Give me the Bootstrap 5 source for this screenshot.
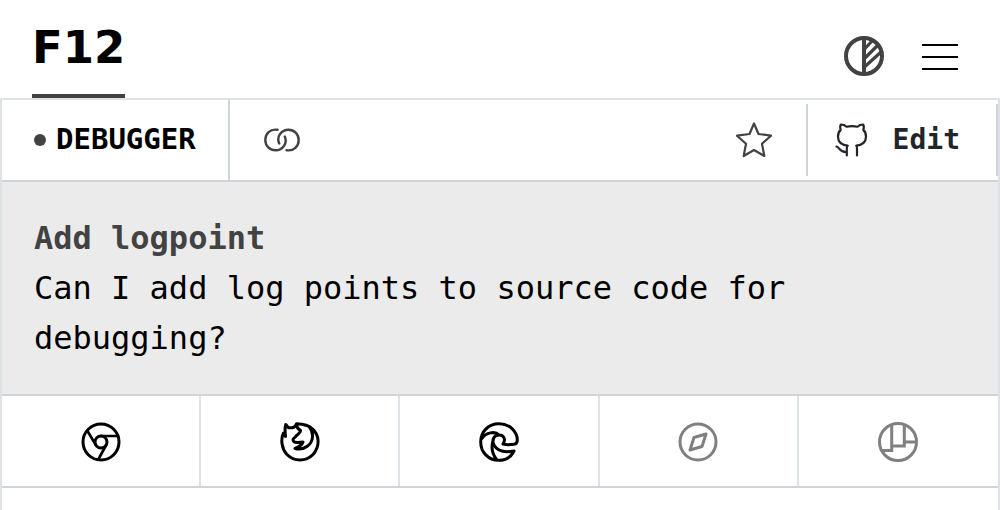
<!DOCTYPE html>
<html lang="en">
<head>
<meta charset="utf-8">
<meta name="viewport" content="width=device-width, initial-scale=1">
<title>F12</title>
<link href="https://cdn.jsdelivr.net/npm/bootstrap@5.3.0/dist/css/bootstrap.min.css" rel="stylesheet">
<style>
  :root { --line: #ced4da; --edge: #dee2e6; --ink: #424242; }
  body { font-family: "DejaVu Sans Mono", monospace; color: #000; background: #fff; }
  a { color: inherit; text-decoration: none; }
  svg { display: block; fill: none; stroke: currentColor; stroke-linecap: round; stroke-linejoin: round; }
  .brand { font: bold 45px/62px "DejaVu Sans", sans-serif; padding-top: 17px; height: 98px; border-bottom: 4px solid var(--ink); }
  .topbar { padding: 0 42px 0 32px; }
  .tools { gap: 38px; padding-top: 14px; }
  .plain { padding: 0; border: 0; background: none; color: inherit; }
  .ink { color: var(--ink); }
  .panel { border: 2px solid var(--edge); border-bottom: 0; }
  .strip { height: 82px; border-bottom: 2px solid var(--line); }
  .category { width: 228px; font-size: 29px; gap: 10px; padding: 0 0 0 32px; border-right: 2px solid var(--line); color: #000; }
  .dot { width: 12px; height: 12px; background: var(--ink); }
  .marks { padding: 0 34px; }
  .edit { font-size: 28px; color: #212529; margin: 4px 0; padding: 0 36px 0 26px; gap: 23px; border: solid var(--line); border-width: 0 2px; }
  .intro { background: #ebebeb; padding: 31px 32px; font-size: 32px; line-height: 50px; border-bottom: 2px solid var(--line); }
  .intro h1, .intro p { font-size: inherit; line-height: inherit; margin: 0; }
  .browsers { border-bottom: 2px solid var(--line); }
  .cell { height: 90px; padding-top: 2px; border-right: 2px solid var(--edge); }
  .cell:last-child { border-right: 0; }
  .cell svg { stroke-width: 3; }
  .off { color: #808080; }
  .square { stroke-linecap: butt; stroke-linejoin: miter; }
  .rest { height: 22px; }
</style>
</head>
<body>
<header class="topbar d-flex justify-content-between">
  <a class="brand" href="#">F12</a>
  <div class="tools d-flex align-items-center">
    <button class="plain ink" type="button" aria-label="Toggle theme">
      <svg width="40" height="40" viewBox="0 0 40 40" stroke-width="4"><circle cx="20" cy="20" r="18"/><path d="M20 2v36"/><path stroke-width="3.200" d="M21 12.500 28 5M21 22 34 9M21 30.500 37 16"/></svg>
    </button>
    <button class="plain" type="button" aria-label="Menu">
      <svg class="square" width="36" height="30" viewBox="0 0 36 30" stroke-width="2"><path d="M0 4h36M0 16h36M0 28h36"/></svg>
    </button>
  </div>
</header>
<main class="panel">
  <div class="strip d-flex">
    <a class="category d-flex align-items-center fw-bold flex-shrink-0" href="#"><span class="dot rounded-circle"></span><span>DEBUGGER</span></a>
    <div class="marks d-flex flex-grow-1 align-items-center justify-content-between ink">
      <a href="#" aria-label="Permalink"><svg width="36" height="24" viewBox="0 0 36 24" stroke-width="2.400"><path d="M13.500 1.800C6 .500 1.300 6 1.300 12 1.300 18 6 22.300 11.500 22.300 18 22.300 24 16 20.800 8.500M22.500 22.200C30 23.500 34.700 18 34.700 12 34.700 6 30 1.700 24.500 1.700 18 1.700 12 8 15.200 15.500"/></svg></a>
      <button class="plain" type="button" aria-label="Favourite"><svg width="36" height="36" viewBox="0 0 36 36" stroke-width="2.200"><path d="M18 1.500 22.500 12 35 13.700 26 21.700 28.300 34 18 28 7.700 34 10 21.700 1 13.700 13.500 12Z"/></svg></button>
    </div>
    <a class="edit d-flex align-items-center fw-bold" href="#">
      <svg width="36" height="36" viewBox="0 0 36 36" stroke-width="2.200"><path d="M23 33.500V26.500Q23 24.500 22.300 23.700C28 23 32 20 32 14.500Q32 10 29.300 8C30.300 5 29.800 3.500 29 2.500 26.500 2.500 24.800 3.500 23.500 4.700Q18 3.500 12.500 4.700C11.200 3.500 9.500 2.500 7 2.500 6.200 3.500 5.700 5 6.700 8Q4 10 4 14.500C4 20 8 23 13.700 23.700Q12.800 24.500 12.800 26.500V33.500M2.500 24.500C5.500 25 5.500 30.500 12.500 30.200"/></svg>
      <span>Edit</span>
    </a>
  </div>
  <section class="intro">
    <h1 class="fw-bold ink">Add logpoint</h1>
    <p>Can I add log points to source code for debugging?</p>
  </section>
  <div class="browsers row row-cols-5 g-0">
    <div class="cell col d-flex align-items-center justify-content-center">
      <svg width="40" height="40" viewBox="0 0 40 40" role="img" aria-label="Chrome"><circle cx="20" cy="20" r="18"/><circle cx="20" cy="20" r="6"/><path stroke-width="2.600" d="M20 14H37M6.500 9 14.500 22.500M25.500 22.500 17.500 37"/></svg>
    </div>
    <div class="cell col d-flex align-items-center justify-content-center">
      <svg width="40" height="40" viewBox="0 0 40 40" role="img" aria-label="Firefox"><path d="M5.500 14.500 3.500 11C.500 17 1.500 26 6.500 32 14 40 26 40 33.500 32 40 24 39.500 13 32.500 7 29 3.500 22 2 16.500 1.800Q15 5.500 12.500 5.800H8.500L5.800 2.500C4.500 6 5 10 5.500 14.500M16.500 2.500Q17 7 20.500 8.500C21 12 16 12.500 15.500 15Q11.500 17 14 19.800C16.500 21.500 20 20 23 20Q22 23.500 15 26.500C25 29 32 22 32.500 15Q33 9 29 4.500"/></svg>
    </div>
    <div class="cell col d-flex align-items-center justify-content-center">
      <svg width="40" height="40" viewBox="0 0 40 40" role="img" aria-label="Edge"><path d="M35 29C32 35 26 38.300 20 38.300 9 38.300 1.700 30 1.700 20 1.700 10 9 1.700 20 1.700 31 1.700 38.300 10 38.300 18Q38.300 22 35 22.200 28 23.200 24 22C27 18 25 13 20.500 13 14.500 13 12.500 18 15 23 18 28.500 25 31 35 29M2.500 17C7 10 16 9 20.500 13M14.500 17C12 24 13 32 18 38"/></svg>
    </div>
    <div class="cell off col d-flex align-items-center justify-content-center">
      <svg width="40" height="40" viewBox="0 0 40 40" role="img" aria-label="Safari"><circle cx="20" cy="20" r="18"/><path d="M28 12 24 24.500 12 28 16 15.500Z"/></svg>
    </div>
    <div class="cell off col d-flex align-items-center justify-content-center">
      <svg width="40" height="40" viewBox="0 0 40 40" role="img" aria-label="Polypane"><circle cx="20" cy="20" r="18.500"/><path class="square" d="M13.700 2.500V28.500H3.500M13.700 24H26.300V2.500M26.300 20H38.500"/></svg>
    </div>
  </div>
  <div class="rest"></div>
</main>
<script src="https://cdn.jsdelivr.net/npm/bootstrap@5.3.0/dist/js/bootstrap.bundle.min.js"></script>
</body>
</html>
